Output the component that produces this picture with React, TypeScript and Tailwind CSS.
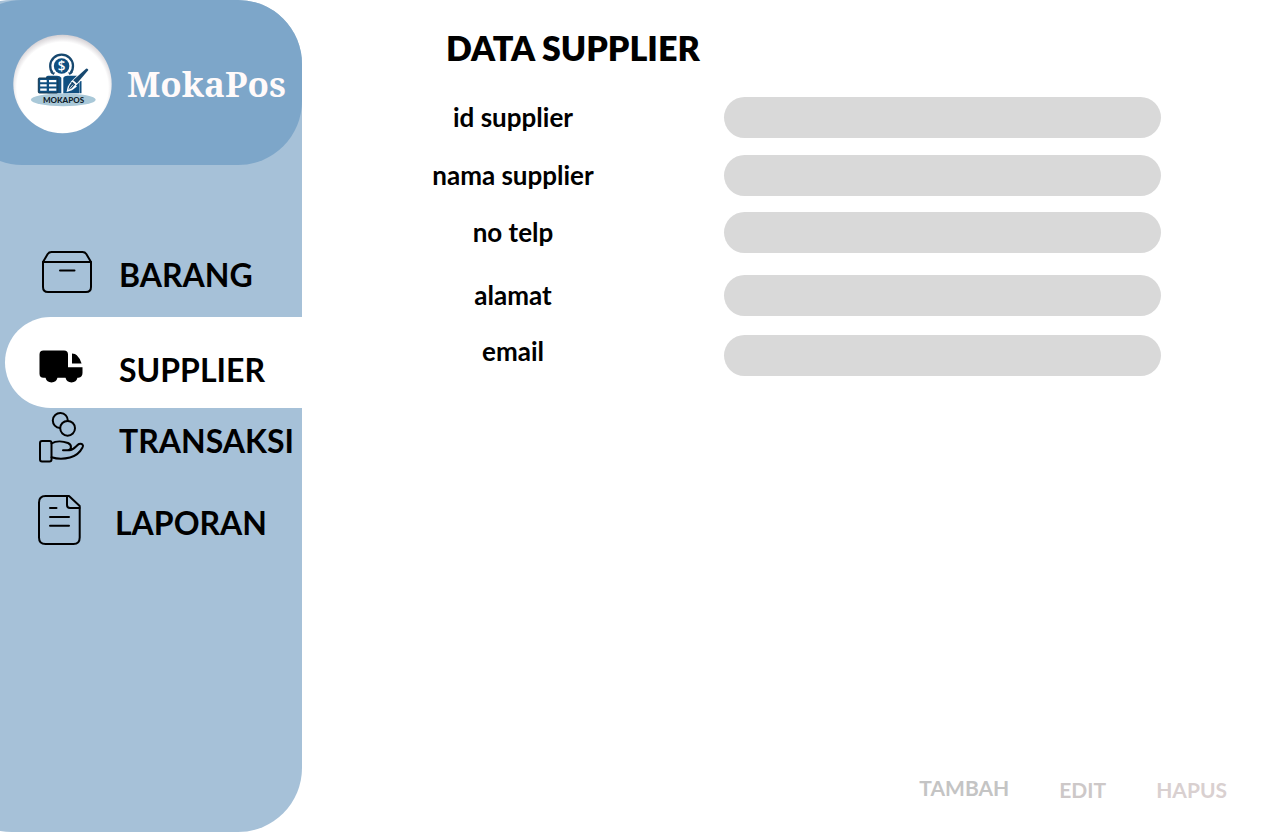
import type { ReactNode } from 'react';

function Logo() {
  return (
    <svg viewBox="0 0 105 105" className="size-[105px] shrink-0" role="img" aria-label="Logo MokaPos">
      <defs>
        <radialGradient id="disc" cx="0.5" cy="0.54" r="0.54">
          <stop offset="0.86" stopColor="#ffffff" />
          <stop offset="1" stopColor="#d3cfd3" />
        </radialGradient>
      </defs>
      <circle cx="52.5" cy="54" r="49.2" fill="url(#disc)" />
      <ellipse cx="53.3" cy="69.800" rx="32.4" ry="6.400" fill="#a9c8d8" />
      <g fill="#0f4f80">
        <circle cx="51.600" cy="36" r="7.800" />
        <path d="M42.600 43a11.400 11.400 0 1 1 18 0" fill="none" stroke="#17486f" strokeWidth="2.300" />
        <path d="M40 42.200l5.200.3-1.700 2.500zM63.200 42.200l-5.200.3 1.700 2.500z" fill="#17486f" />
        <path d="M36 47.500q0-1.700 2-1.700h9q3 0 4.300 2v15.400H37.500z" />
        <path d="M53.300 47.800q1-2 4-2H69.500v17.400H53.300z" />
        <path d="M69.800 51h1.700v12.200h-1.700z" />
        <rect x="28.300" y="48" width="19.500" height="15" rx="1" stroke="#17384f" strokeWidth="1" />
      </g>
      <g fill="#ffffff">
        <path d="M30.200 50h6.500v2.300h-6.500zM30.200 54.200h6.500v2.300h-6.500zM30.200 58.400h6.500v2.300h-6.500z" />
        <path d="M39 50h7.300v2.300H39zM39 54.200h7.300v2.300H39zM39 58.400h7.300v2.300H39z" />
      </g>
      <path d="M78.500 39L63 54" stroke="#ffffff" strokeWidth="6.500" />
      <path d="M60.500 52.200L57.800 56.500 56.500 62l5.500-1.700 5-3.800z" fill="#ffffff" />
      <path d="M76 38.700q1.600-.8 2.400 1.300L66.900 53.400 63.200 50.200z" fill="#17486f" />
      <path d="M62.300 51.700l3 2.700-3.800 4.200-3.200 1.300 1-3.800z" fill="#17486f" />
      <path d="M58 60.700l5-6" stroke="#ffffff" strokeWidth="0.8" />
      <text x="51.600" y="40.900" textAnchor="middle" fontSize="13.500" fontWeight="600" fill="#ffffff" className="font-['Open_Sans',sans-serif]">$</text>
      <text x="53.500" y="72.900" textAnchor="middle" fontSize="8" fontWeight="900" fill="#10202a" className="font-['Lato',sans-serif]">MOKAPOS</text>
    </svg>
  );
}

const stroke = {
  fill: 'none',
  stroke: 'currentColor',
  strokeWidth: 2,
  strokeLinecap: 'round',
  strokeLinejoin: 'round',
} as const;

function BoxIcon() {
  return (
    <svg viewBox="0 0 50 42" className="h-[42px] w-[50px]" aria-hidden="true" {...stroke}>
      <path d="M1 11L5.700 3Q7 1 9.500 1H40.500Q43 1 44.300 3L49 11V36Q49 41 44 41H6Q1 41 1 36Z" />
      <path d="M1 11H49M18 19.600H32.500" />
    </svg>
  );
}

function TruckIcon() {
  return (
    <svg viewBox="0 0 44 34" className="h-[34px] w-[44px]" aria-hidden="true" fill="currentColor">
      <path d="M4.500 .500H25Q29 .500 29 4.500V17.200H43.500V23Q43.500 27 39.500 27.800H38.500A6.200 6.200 0 0 1 26.500 27.800H18.500A6.200 6.200 0 0 1 6.500 27.800H4.500Q.500 27.800 .500 23.800V4.500Q.500 .500 4.500 .500Z" />
      <path d="M33 3.500Q36.500 3.500 37.800 5.200Q41.500 8.800 42.600 13.500H33Z" />
    </svg>
  );
}

function HandIcon() {
  return (
    <svg viewBox="0 0 46 52" className="h-[52px] w-[46px]" aria-hidden="true" {...stroke}>
      <path d="M21 16A7.500 7.500 0 1 1 28.800 8.800" />
      <circle cx="28.600" cy="16.300" r="7.400" />
      <rect x="1" y="29" width="11.500" height="20.500" rx="2" />
      <path d="M12.500 31.500C17 28.500 24 29 29 31C33.500 33 32.500 38.200 28.500 38.200H24H30C35 38.500 37 33.500 40 32C43 31 45 33 43.500 35.500C41 40.500 36.500 44 31 45.500C24 47.300 18 47 12.500 45.200" />
    </svg>
  );
}

function DocIcon() {
  return (
    <svg viewBox="0 0 44 50" className="h-[50px] w-[44px]" aria-hidden="true" {...stroke}>
      <path d="M7.500 1H31L41.700 11V42.500Q41.700 49 35.500 49H7.500Q1 49 1 42.500V7.500Q1 1 7.500 1Z" />
      <path d="M29 1.500V10Q29 13 32 13H41.500M12 13H18.500M12 22H31M12 30.800H31" />
    </svg>
  );
}

function NavItem({ icon, label, className, active }: { icon: ReactNode; label: string; className: string; active?: boolean }) {
  return (
    <li className={className}>
      <a href={`#${label.toLowerCase()}`} aria-current={active ? 'page' : undefined} className="flex h-full items-center">
        {icon}
        <span className="pt-1.5 text-[32px] leading-8 font-bold">{label}</span>
      </a>
    </li>
  );
}

const fields = [
  { id: 'id-supplier', label: 'id supplier', row: 'items-center' },
  { id: 'nama-supplier', label: 'nama supplier', row: 'mt-[17px] items-center' },
  { id: 'no-telp', label: 'no telp', row: 'mt-4 items-center' },
  { id: 'alamat', label: 'alamat', row: 'mt-[22px] items-center' },
  { id: 'email', label: 'email', row: 'mt-[19px] items-start' },
];

export default function App() {
  return (
    <div className="flex min-h-screen bg-white font-['Lato',sans-serif] text-black">
      <aside className="flex w-[302px] shrink-0 overflow-hidden">
        <div className="-ml-[52px] flex-1 rounded-[64px] bg-[#a6c1d8] pl-[52px]">
          <header className="-ml-[42px] flex h-[165px] items-center rounded-[64px] bg-[#7da6c9] pl-[52px]">
            <Logo />
            <span className="ml-3 pt-0.5 font-['Noto_Serif','DejaVu_Serif_Condensed',serif] text-[35px] leading-10 font-bold text-[#fffafa]">MokaPos</span>
          </header>
          <nav className="pt-[61px]">
            <ul>
              <NavItem className="h-[91px] pl-[42px]" icon={<span className="w-[77px]"><BoxIcon /></span>} label="BARANG" />
              <NavItem className="ml-[5px] h-[91px] rounded-l-full bg-white pt-2 pl-[34px]" icon={<span className="w-[80px]"><TruckIcon /></span>} label="SUPPLIER" active />
              <NavItem className="h-[60px] pl-[39px]" icon={<span className="w-[80px]"><HandIcon /></span>} label="TRANSAKSI" />
              <NavItem className="mt-[22px] h-[60px] pl-[38px]" icon={<span className="w-[77px]"><DocIcon /></span>} label="LAPORAN" />
            </ul>
          </nav>
        </div>
      </aside>
      <main className="flex flex-1 flex-col pr-[53px] pb-[30px]">
        <h1 className="pt-7 pl-[144px] text-[34px] leading-10 font-extrabold">DATA SUPPLIER</h1>
        <form className="mt-[29px] flex flex-1 flex-col pl-[102px]">
          {fields.map((f) => (
            <div key={f.id} className={`flex ${f.row}`}>
              <label htmlFor={f.id} className="w-[218px] shrink-0 pb-0.5 text-center text-[26px] leading-8 font-bold">{f.label}</label>
              <input id={f.id} name={f.id} type="text" className="ml-[102px] h-[41px] max-w-[437px] min-w-0 flex-1 rounded-full bg-[#d9d9d9] px-5 text-xl outline-none" />
            </div>
          ))}
          <div className="mt-auto flex items-start justify-end gap-[50px] text-[21px] leading-6 font-bold">
            <button type="button" className="text-[#c4c4c4]">TAMBAH</button>
            <button type="button" className="pt-0.5 text-[#cdc8c8]">EDIT</button>
            <button type="button" className="pt-0.5 text-[#d9d0d0]">HAPUS</button>
          </div>
        </form>
      </main>
    </div>
  );
}
